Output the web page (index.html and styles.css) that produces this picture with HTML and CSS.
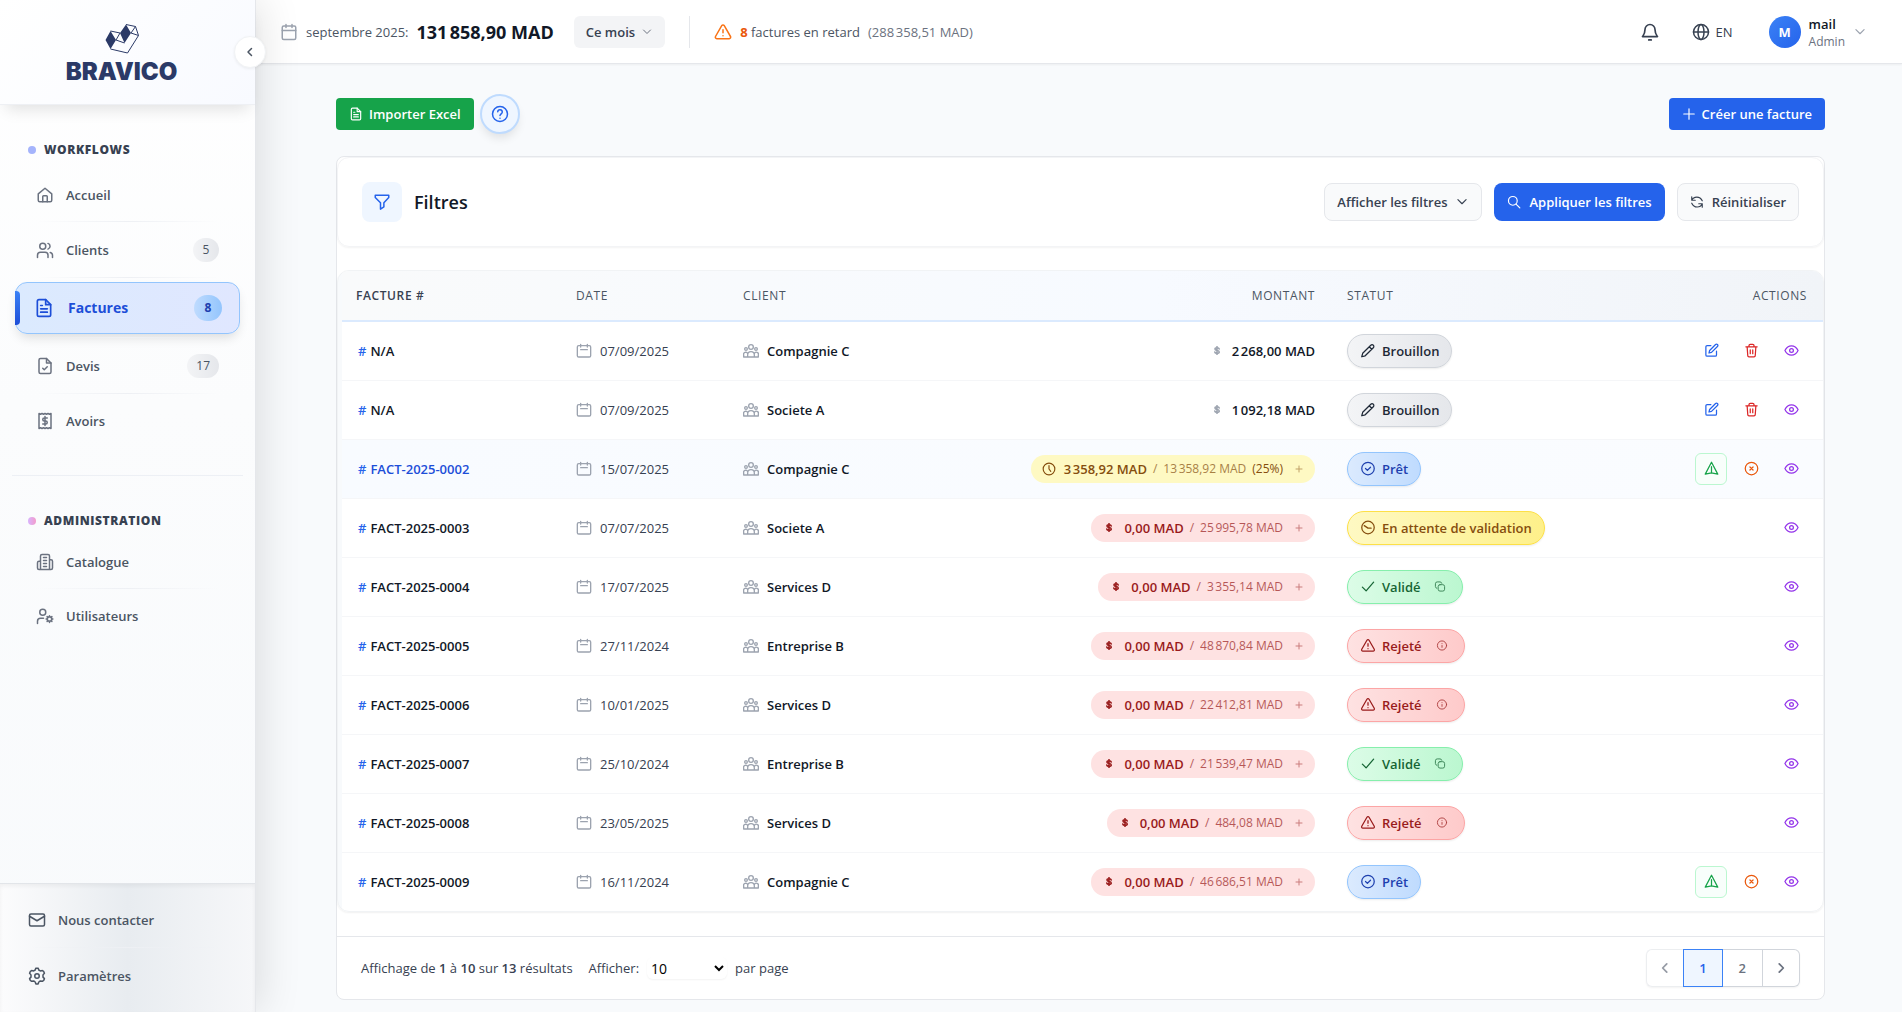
FILE: index.html
```html
<!DOCTYPE html>
<html lang="fr">
<head>
    <meta charset="UTF-8">
    <meta name="viewport" content="width=device-width, initial-scale=1.0">
    <title>Bravico - Factures</title>
    <link rel="stylesheet" href="styles.css">
</head>
<body>

    <!-- Icônes partagées -->
    <svg class="sprite" aria-hidden="true">
        <symbol id="i-home" viewBox="0 0 24 24"><path d="M3 10.5 12 3l9 7.500V19a2 2 0 0 1-2 2H5a2 2 0 0 1-2-2z"/><path d="M9 21v-7a1 1 0 0 1 1-1h4a1 1 0 0 1 1 1v7"/></symbol>
        <symbol id="i-users" viewBox="0 0 24 24"><circle cx="9" cy="7" r="4"/><path d="M2 22v-3a4 4 0 0 1 4-4h6a4 4 0 0 1 4 4v3M16 3.200a4 4 0 0 1 0 7.600M19 15.200a4 4 0 0 1 3 3.800v3"/></symbol>
        <symbol id="i-file" viewBox="0 0 24 24"><path d="M14 2H6a2 2 0 0 0-2 2v16a2 2 0 0 0 2 2h12a2 2 0 0 0 2-2V8z"/><path d="M14 2v6h6M8 9h2M8 13h8M8 17h8"/></symbol>
        <symbol id="i-file-check" viewBox="0 0 24 24"><path d="M14 2H6a2 2 0 0 0-2 2v16a2 2 0 0 0 2 2h12a2 2 0 0 0 2-2V8z"/><path d="M14 2v6h6M9 15l2 2 4-4"/></symbol>
        <symbol id="i-receipt" viewBox="0 0 24 24"><path d="M4 2v20l2-1 2 1 2-1 2 1 2-1 2 1 2-1 2 1V2l-2 1-2-1-2 1-2-1-2 1-2-1-2 1z"/><path d="M15 8h-4a2 2 0 0 0 0 4h2a2 2 0 0 1 0 4H9M12 6v12"/></symbol>
        <symbol id="i-building" viewBox="0 0 24 24"><path d="M6 22V4a2 2 0 0 1 2-2h8a2 2 0 0 1 2 2v18zM6 11H4a2 2 0 0 0-2 2v7a2 2 0 0 0 2 2h2M18 9h2a2 2 0 0 1 2 2v9a2 2 0 0 1-2 2h-2M10 6h4M10 10h4M10 14h4M10 18h4"/></symbol>
        <symbol id="i-user-cog" viewBox="0 0 24 24"><circle cx="9" cy="7" r="4"/><path d="M2 22v-3a4 4 0 0 1 4-4h4"/><circle cx="18" cy="16" r="3"/><path d="M18 11.500V13M18 19v1.500M22.500 16H21M15 16h-1.500M21.200 12.800l-1 1M15.800 18.200l-1 1M21.200 19.200l-1-1M15.800 13.800l-1-1"/></symbol>
        <symbol id="i-mail" viewBox="0 0 24 24"><rect x="2" y="4" width="20" height="16" rx="2"/><path d="m2 7 10 6 10-6"/></symbol>
        <symbol id="i-cog" viewBox="0 0 24 24"><path d="M9.600 4 10.500 1.500h3L14.400 4l2 1.200 2.700-.5 1.800 1.200 1 2.400L20 10.500v3l1.900 2-1 2.400-1.800 1.200-2.700-.5-2 1.400-.9 2.500h-3L9.600 20l-2-1.400-2.700.5-1.800-1.200-1-2.400 1.900-2v-3l-1.900-2.200 1-2.400 1.800-1.200 2.700.5z"/><circle cx="12" cy="12" r="3"/></symbol>
        <symbol id="i-calendar" viewBox="0 0 24 24"><rect x="3" y="4" width="18" height="18" rx="2"/><path d="M8 2v4M16 2v4M3 10h18"/></symbol>
        <symbol id="i-date" viewBox="0 0 24 24"><rect x="2" y="4" width="20" height="17" rx="2"/><path d="M7 2v4M17 2v4M7 10h10"/></symbol>
        <symbol id="i-warning" viewBox="0 0 24 24"><path d="M10.300 3.600 2 18a2 2 0 0 0 1.700 3h16.600a2 2 0 0 0 1.700-3L13.700 3.600a2 2 0 0 0-3.400 0z"/><path d="M12 9v4M12 17v.1"/></symbol>
        <symbol id="i-bell" viewBox="0 0 24 24"><path d="M18 9A6 6 0 0 0 6 9c0 5-1.500 6.500-3 8.500h18c-1.500-2-3-3.500-3-8.500zM10.500 21.500h3"/></symbol>
        <symbol id="i-globe" viewBox="0 0 24 24"><circle cx="12" cy="12" r="10"/><ellipse cx="12" cy="12" rx="4" ry="10"/><path d="M2 12h20"/></symbol>
        <symbol id="i-down" viewBox="0 0 24 24"><path d="m5 8 7 7 7-7"/></symbol>
        <symbol id="i-left" viewBox="0 0 24 24"><path d="m15 5-7 7 7 7"/></symbol>
        <symbol id="i-right" viewBox="0 0 24 24"><path d="m9 5 7 7-7 7"/></symbol>
        <symbol id="i-help" viewBox="0 0 24 24"><circle cx="12" cy="12" r="10"/><path d="M9 9a3 3 0 0 1 6 .5c0 2-3 2.500-3 4.500M12 17.500v.1"/></symbol>
        <symbol id="i-plus" viewBox="0 0 24 24"><path d="M12 3v18M3 12h18"/></symbol>
        <symbol id="i-filter" viewBox="0 0 24 24"><path d="M3 3h18v3l-6.500 7v5.500L10 21.500V13L3 6z"/></symbol>
        <symbol id="i-search" viewBox="0 0 24 24"><circle cx="10" cy="10" r="7.500"/><path d="m15.500 15.500 6.500 6.500"/></symbol>
        <symbol id="i-refresh" viewBox="0 0 24 24"><path d="M3 3v6h6M21 21v-6h-6M3 9c3-7 14-8 18 1M21 15c-3 7-14 8-18-1"/></symbol>
        <symbol id="i-group" viewBox="0 0 24 24"><circle cx="12" cy="6" r="3.500"/><circle cx="4.500" cy="9" r="2"/><circle cx="19.500" cy="9" r="2"/><path d="M7 21v-3a5 5 0 0 1 10 0v3zM7 21H1v-3a3 3 0 0 1 6-2M17 21h6v-3a3 3 0 0 0-6-2"/></symbol>
        <symbol id="i-dollar" viewBox="0 0 24 24"><path d="M18 8c-.5-2.500-3-3.500-6-3.500S6.500 6 6.500 8.200C6.500 14 18 10 18 15.800c0 2.200-2.500 3.700-6 3.700-3 0-5.500-1-6-3.500M12 1v22"/></symbol>
        <symbol id="i-clock" viewBox="0 0 24 24"><circle cx="12" cy="12" r="10"/><path d="M12 6v6l3 4"/></symbol>
        <symbol id="i-wait" viewBox="0 0 24 24"><circle cx="12" cy="12" r="10"/><path d="m6 9 6 4h5"/></symbol>
        <symbol id="i-pencil" viewBox="0 0 24 24"><path d="M16.500 3.500a2.500 2.500 0 0 1 4 4L7.500 20.500 2 22l1.500-5.500zM14 6l4 4"/></symbol>
        <symbol id="i-ok" viewBox="0 0 24 24"><circle cx="12" cy="12" r="10"/><path d="m8 12 3 3 5-5"/></symbol>
        <symbol id="i-check" viewBox="0 0 24 24"><path d="m3 13 6 6L21 5"/></symbol>
        <symbol id="i-copy" viewBox="0 0 24 24"><rect x="8" y="8" width="14" height="14" rx="4"/><path d="M5 16a4 4 0 0 1-3-4V6a4 4 0 0 1 4-4h6a4 4 0 0 1 4 3"/></symbol>
        <symbol id="i-info" viewBox="0 0 24 24"><circle cx="12" cy="12" r="10"/><path d="M12 12v4M12 8v.1"/></symbol>
        <symbol id="i-edit" viewBox="0 0 24 24"><path d="M11 4H5a2 2 0 0 0-2 2v13a2 2 0 0 0 2 2h13a2 2 0 0 0 2-2v-6"/><path d="M18.500 2.500a2 2 0 0 1 3 3L12 15l-4 1 1-4z"/></symbol>
        <symbol id="i-trash" viewBox="0 0 24 24"><path d="M3 6h18M5 6l1 14a2 2 0 0 0 2 2h8a2 2 0 0 0 2-2l1-14M8 6V4a2 2 0 0 1 2-2h4a2 2 0 0 1 2 2v2M10 11v6M14 11v6"/></symbol>
        <symbol id="i-eye" viewBox="0 0 24 24"><path d="M1.500 12C4 7 8 4.500 12 4.500S20 7 22.500 12C20 17 16 19.500 12 19.500S4 17 1.500 12z"/><circle cx="12" cy="12" r="3"/></symbol>
        <symbol id="i-send" viewBox="0 0 24 24"><path d="M12 2 2 21l10-2 10 2zM12 19V9"/></symbol>
        <symbol id="i-cancel" viewBox="0 0 24 24"><circle cx="12" cy="12" r="10"/><path d="m9.500 9.500 5 5M14.500 9.500l-5 5"/></symbol>
    </svg>

    <div class="app">

        <!-- Barre latérale -->
        <aside class="sidebar">
            <div class="brand">
                <svg class="brand-mark" viewBox="0 0 34 30" aria-hidden="true">
                    <path class="fill" d="M5.500 7 11 16 5.500 25 .5 16zM21 .5 26 9 19.500 19 15 9z"/>
                    <path class="line" d="M21 .5 30.500 2.500 33.500 11.500 22.500 29 5.500 25M5.500 7 15 9M11 16l8.500 3M26 9l7.500 2.500M11 16l4-7M26 9l4.500-6.500"/>
                </svg>
                <span class="brand-name">BRAVICO</span>
            </div>
            <button class="collapse" aria-label="Réduire le menu"><svg class="icon"><use href="#i-left"/></svg></button>

            <nav class="menu">
                <h2 class="menu-title"><span class="dot"></span>WORKFLOWS</h2>
                <ul class="nav">
                    <li><a href="#" class="nav-link"><svg class="icon"><use href="#i-home"/></svg>Accueil</a></li>
                    <li><a href="#" class="nav-link has-count"><svg class="icon"><use href="#i-users"/></svg>Clients<span class="count">5</span></a></li>
                    <li><a href="#" class="nav-link active"><svg class="icon"><use href="#i-file"/></svg>Factures<span class="count">8</span></a></li>
                    <li><a href="#" class="nav-link has-count"><svg class="icon"><use href="#i-file-check"/></svg>Devis<span class="count">17</span></a></li>
                    <li><a href="#" class="nav-link"><svg class="icon"><use href="#i-receipt"/></svg>Avoirs</a></li>
                </ul>
                <div class="menu-admin">
                    <h2 class="menu-title"><span class="dot pink"></span>ADMINISTRATION</h2>
                    <ul class="nav">
                        <li><a href="#" class="nav-link"><svg class="icon"><use href="#i-building"/></svg>Catalogue</a></li>
                        <li><a href="#" class="nav-link"><svg class="icon"><use href="#i-user-cog"/></svg>Utilisateurs</a></li>
                    </ul>
                </div>
            </nav>

            <ul class="nav nav-bottom">
                <li><a href="#" class="nav-link has-count"><svg class="icon"><use href="#i-mail"/></svg>Nous contacter</a></li>
                <li><a href="#" class="nav-link has-count"><svg class="icon"><use href="#i-cog"/></svg>Paramètres</a></li>
            </ul>
        </aside>

        <div class="content">

            <!-- En-tête -->
            <header class="topbar">
                <div class="revenue">
                    <svg class="icon muted"><use href="#i-calendar"/></svg>
                    <span class="revenue-label">septembre 2025:</span>
                    <strong class="revenue-total">131&#8239;858,90 MAD</strong>
                </div>
                <button class="period">Ce mois <svg class="icon"><use href="#i-down"/></svg></button>
                <div class="late">
                    <svg class="icon"><use href="#i-warning"/></svg>
                    <span><b>8</b> factures en retard</span>
                    <span class="late-total">(288&#8239;358,51 MAD)</span>
                </div>
                <div class="account">
                    <button class="plain" aria-label="Notifications"><svg class="icon bell"><use href="#i-bell"/></svg></button>
                    <button class="plain lang"><svg class="icon"><use href="#i-globe"/></svg>EN</button>
                    <button class="plain user">
                        <span class="avatar">M</span>
                        <span class="user-text"><span class="user-name">mail</span><span class="user-role">Admin</span></span>
                        <svg class="icon small muted"><use href="#i-down"/></svg>
                    </button>
                </div>
            </header>

            <main class="page">
                <div class="toolbar">
                    <button class="btn green"><svg class="icon small"><use href="#i-file"/></svg>Importer Excel</button>
                    <button class="help" aria-label="Aide"><svg class="icon"><use href="#i-help"/></svg></button>
                    <button class="btn blue create"><svg class="icon small"><use href="#i-plus"/></svg>Créer une facture</button>
                </div>

                <section class="card">
                    <!-- Filtres -->
                    <div class="filters">
                        <span class="filters-icon"><svg class="icon"><use href="#i-filter"/></svg></span>
                        <h1>Filtres</h1>
                        <div class="filters-actions">
                            <button class="btn tall light">Afficher les filtres <svg class="icon small"><use href="#i-down"/></svg></button>
                            <button class="btn tall blue"><svg class="icon small"><use href="#i-search"/></svg>Appliquer les filtres</button>
                            <button class="btn tall light"><svg class="icon small"><use href="#i-refresh"/></svg>Réinitialiser</button>
                        </div>
                    </div>

                    <!-- Liste des factures -->
                    <div class="table-wrap">
                        <table class="invoices">
                            <colgroup>
                                <col class="col-number"><col class="col-date"><col class="col-client"><col class="col-amount"><col><col class="col-actions">
                            </colgroup>
                            <thead>
                                <tr>
                                    <th class="first">FACTURE #</th>
                                    <th>DATE</th>
                                    <th>CLIENT</th>
                                    <th class="right">MONTANT</th>
                                    <th>STATUT</th>
                                    <th class="right">ACTIONS</th>
                                </tr>
                            </thead>
                            <tbody>
                                <tr>
                                    <td><span class="number"><i>#</i>N/A</span></td>
                                    <td><span class="date"><svg class="icon"><use href="#i-date"/></svg>07/09/2025</span></td>
                                    <td><span class="client"><svg class="icon"><use href="#i-group"/></svg>Compagnie C</span></td>
                                    <td class="right"><span class="amount plain-amount"><svg class="icon dollar"><use href="#i-dollar"/></svg>2&#8239;268,00 MAD</span></td>
                                    <td><span class="status draft"><svg class="icon"><use href="#i-pencil"/></svg>Brouillon</span></td>
                                    <td><div class="actions">
                                        <button class="edit" aria-label="Modifier"><svg class="icon"><use href="#i-edit"/></svg></button>
                                        <button class="delete" aria-label="Supprimer"><svg class="icon"><use href="#i-trash"/></svg></button>
                                        <button class="view" aria-label="Voir"><svg class="icon"><use href="#i-eye"/></svg></button>
                                    </div></td>
                                </tr>
                                <tr>
                                    <td><span class="number"><i>#</i>N/A</span></td>
                                    <td><span class="date"><svg class="icon"><use href="#i-date"/></svg>07/09/2025</span></td>
                                    <td><span class="client"><svg class="icon"><use href="#i-group"/></svg>Societe A</span></td>
                                    <td class="right"><span class="amount plain-amount"><svg class="icon dollar"><use href="#i-dollar"/></svg>1&#8239;092,18 MAD</span></td>
                                    <td><span class="status draft"><svg class="icon"><use href="#i-pencil"/></svg>Brouillon</span></td>
                                    <td><div class="actions">
                                        <button class="edit" aria-label="Modifier"><svg class="icon"><use href="#i-edit"/></svg></button>
                                        <button class="delete" aria-label="Supprimer"><svg class="icon"><use href="#i-trash"/></svg></button>
                                        <button class="view" aria-label="Voir"><svg class="icon"><use href="#i-eye"/></svg></button>
                                    </div></td>
                                </tr>
                                <tr class="hovered">
                                    <td><span class="number"><i>#</i>FACT-2025-0002</span></td>
                                    <td><span class="date"><svg class="icon"><use href="#i-date"/></svg>15/07/2025</span></td>
                                    <td><span class="client"><svg class="icon"><use href="#i-group"/></svg>Compagnie C</span></td>
                                    <td class="right"><span class="amount partial"><svg class="icon"><use href="#i-clock"/></svg>3&#8239;358,92 MAD<small>/</small><small>13&#8239;358,92 MAD</small><em>(25%)</em><svg class="icon more"><use href="#i-plus"/></svg></span></td>
                                    <td><span class="status ready"><svg class="icon"><use href="#i-ok"/></svg>Prêt</span></td>
                                    <td><div class="actions">
                                        <button class="send" aria-label="Envoyer"><svg class="icon"><use href="#i-send"/></svg></button>
                                        <button class="cancel" aria-label="Annuler"><svg class="icon"><use href="#i-cancel"/></svg></button>
                                        <button class="view" aria-label="Voir"><svg class="icon"><use href="#i-eye"/></svg></button>
                                    </div></td>
                                </tr>
                                <tr>
                                    <td><span class="number"><i>#</i>FACT-2025-0003</span></td>
                                    <td><span class="date"><svg class="icon"><use href="#i-date"/></svg>07/07/2025</span></td>
                                    <td><span class="client"><svg class="icon"><use href="#i-group"/></svg>Societe A</span></td>
                                    <td class="right"><span class="amount unpaid"><svg class="icon dollar"><use href="#i-dollar"/></svg>0,00 MAD<small>/</small><small>25&#8239;995,78 MAD</small><svg class="icon more"><use href="#i-plus"/></svg></span></td>
                                    <td><span class="status pending"><svg class="icon"><use href="#i-wait"/></svg>En attente de validation</span></td>
                                    <td><div class="actions">
                                        <button class="view" aria-label="Voir"><svg class="icon"><use href="#i-eye"/></svg></button>
                                    </div></td>
                                </tr>
                                <tr>
                                    <td><span class="number"><i>#</i>FACT-2025-0004</span></td>
                                    <td><span class="date"><svg class="icon"><use href="#i-date"/></svg>17/07/2025</span></td>
                                    <td><span class="client"><svg class="icon"><use href="#i-group"/></svg>Services D</span></td>
                                    <td class="right"><span class="amount unpaid"><svg class="icon dollar"><use href="#i-dollar"/></svg>0,00 MAD<small>/</small><small>3&#8239;355,14 MAD</small><svg class="icon more"><use href="#i-plus"/></svg></span></td>
                                    <td><span class="status valid"><svg class="icon"><use href="#i-check"/></svg>Validé<svg class="icon extra"><use href="#i-copy"/></svg></span></td>
                                    <td><div class="actions">
                                        <button class="view" aria-label="Voir"><svg class="icon"><use href="#i-eye"/></svg></button>
                                    </div></td>
                                </tr>
                                <tr>
                                    <td><span class="number"><i>#</i>FACT-2025-0005</span></td>
                                    <td><span class="date"><svg class="icon"><use href="#i-date"/></svg>27/11/2024</span></td>
                                    <td><span class="client"><svg class="icon"><use href="#i-group"/></svg>Entreprise B</span></td>
                                    <td class="right"><span class="amount unpaid"><svg class="icon dollar"><use href="#i-dollar"/></svg>0,00 MAD<small>/</small><small>48&#8239;870,84 MAD</small><svg class="icon more"><use href="#i-plus"/></svg></span></td>
                                    <td><span class="status rejected"><svg class="icon"><use href="#i-warning"/></svg>Rejeté<svg class="icon extra"><use href="#i-info"/></svg></span></td>
                                    <td><div class="actions">
                                        <button class="view" aria-label="Voir"><svg class="icon"><use href="#i-eye"/></svg></button>
                                    </div></td>
                                </tr>
                                <tr>
                                    <td><span class="number"><i>#</i>FACT-2025-0006</span></td>
                                    <td><span class="date"><svg class="icon"><use href="#i-date"/></svg>10/01/2025</span></td>
                                    <td><span class="client"><svg class="icon"><use href="#i-group"/></svg>Services D</span></td>
                                    <td class="right"><span class="amount unpaid"><svg class="icon dollar"><use href="#i-dollar"/></svg>0,00 MAD<small>/</small><small>22&#8239;412,81 MAD</small><svg class="icon more"><use href="#i-plus"/></svg></span></td>
                                    <td><span class="status rejected"><svg class="icon"><use href="#i-warning"/></svg>Rejeté<svg class="icon extra"><use href="#i-info"/></svg></span></td>
                                    <td><div class="actions">
                                        <button class="view" aria-label="Voir"><svg class="icon"><use href="#i-eye"/></svg></button>
                                    </div></td>
                                </tr>
                                <tr>
                                    <td><span class="number"><i>#</i>FACT-2025-0007</span></td>
                                    <td><span class="date"><svg class="icon"><use href="#i-date"/></svg>25/10/2024</span></td>
                                    <td><span class="client"><svg class="icon"><use href="#i-group"/></svg>Entreprise B</span></td>
                                    <td class="right"><span class="amount unpaid"><svg class="icon dollar"><use href="#i-dollar"/></svg>0,00 MAD<small>/</small><small>21&#8239;539,47 MAD</small><svg class="icon more"><use href="#i-plus"/></svg></span></td>
                                    <td><span class="status valid"><svg class="icon"><use href="#i-check"/></svg>Validé<svg class="icon extra"><use href="#i-copy"/></svg></span></td>
                                    <td><div class="actions">
                                        <button class="view" aria-label="Voir"><svg class="icon"><use href="#i-eye"/></svg></button>
                                    </div></td>
                                </tr>
                                <tr>
                                    <td><span class="number"><i>#</i>FACT-2025-0008</span></td>
                                    <td><span class="date"><svg class="icon"><use href="#i-date"/></svg>23/05/2025</span></td>
                                    <td><span class="client"><svg class="icon"><use href="#i-group"/></svg>Services D</span></td>
                                    <td class="right"><span class="amount unpaid"><svg class="icon dollar"><use href="#i-dollar"/></svg>0,00 MAD<small>/</small><small>484,08 MAD</small><svg class="icon more"><use href="#i-plus"/></svg></span></td>
                                    <td><span class="status rejected"><svg class="icon"><use href="#i-warning"/></svg>Rejeté<svg class="icon extra"><use href="#i-info"/></svg></span></td>
                                    <td><div class="actions">
                                        <button class="view" aria-label="Voir"><svg class="icon"><use href="#i-eye"/></svg></button>
                                    </div></td>
                                </tr>
                                <tr>
                                    <td><span class="number"><i>#</i>FACT-2025-0009</span></td>
                                    <td><span class="date"><svg class="icon"><use href="#i-date"/></svg>16/11/2024</span></td>
                                    <td><span class="client"><svg class="icon"><use href="#i-group"/></svg>Compagnie C</span></td>
                                    <td class="right"><span class="amount unpaid"><svg class="icon dollar"><use href="#i-dollar"/></svg>0,00 MAD<small>/</small><small>46&#8239;686,51 MAD</small><svg class="icon more"><use href="#i-plus"/></svg></span></td>
                                    <td><span class="status ready"><svg class="icon"><use href="#i-ok"/></svg>Prêt</span></td>
                                    <td><div class="actions">
                                        <button class="send" aria-label="Envoyer"><svg class="icon"><use href="#i-send"/></svg></button>
                                        <button class="cancel" aria-label="Annuler"><svg class="icon"><use href="#i-cancel"/></svg></button>
                                        <button class="view" aria-label="Voir"><svg class="icon"><use href="#i-eye"/></svg></button>
                                    </div></td>
                                </tr>
                            </tbody>
                        </table>
                    </div>

                    <!-- Pagination -->
                    <div class="pagination">
                        <p>Affichage de <b>1</b> à <b>10</b> sur <b>13</b> résultats</p>
                        <label for="per-page">Afficher:</label>
                        <select id="per-page">
                            <option>10</option>
                            <option>25</option>
                            <option>50</option>
                        </select>
                        <span>par page</span>
                        <div class="pages">
                            <button class="prev" aria-label="Page précédente" disabled><svg class="icon small"><use href="#i-left"/></svg></button>
                            <button class="current">1</button>
                            <button>2</button>
                            <button class="next" aria-label="Page suivante"><svg class="icon small"><use href="#i-right"/></svg></button>
                        </div>
                    </div>
                </section>
            </main>
        </div>
    </div>

</body>
</html>
```
FILE: styles.css
```css
* {
    box-sizing: border-box;
}
body {
    margin: 0;
    font-family: "Open Sans", "Noto Sans", sans-serif;
    font-size: 13px;
    line-height: 20px;
    color: #374151;
    background: #f8fafc;
}
button, select {
    font: inherit;
    color: inherit;
    cursor: pointer;
}
a {
    color: inherit;
    text-decoration: none;
}
h1, h2, p, ul {
    margin: 0;
    padding: 0;
}
b, strong {
    font-weight: 600;
}
.sprite {
    position: absolute;
    width: 0;
    height: 0;
}
.icon {
    width: 18px;
    height: 18px;
    flex: none;
    fill: none;
    stroke: currentColor;
    stroke-width: 2;
    stroke-linecap: round;
    stroke-linejoin: round;
}
.icon.small {
    width: 14px;
    height: 14px;
}
.muted {
    color: #9ca3af;
}
.app {
    display: flex;
    min-height: 100vh;
}

/* Barre latérale */
.sidebar {
    position: relative;
    z-index: 2;
    width: 256px;
    flex: none;
    display: flex;
    flex-direction: column;
    background: linear-gradient(180deg, #ffffff, #fbfcfd 40%, #f8fafc);
    border-right: 1px solid #e5e7eb;
    box-shadow: 4px 0 40px rgba(0, 0, 0, 0.12);
}
.brand {
    height: 105px;
    padding: 10px 12px 0 0;
    display: flex;
    flex-direction: column;
    align-items: center;
    justify-content: center;
    background: linear-gradient(135deg, #ffffff, #f8faff);
    border-bottom: 1px solid #eef0f4;
    box-shadow: 0 10px 15px -6px rgba(0, 0, 0, 0.12);
}
.brand-mark {
    width: 34px;
    height: 30px;
}
.brand-mark .fill {
    fill: #2b3a67;
}
.brand-mark .line {
    fill: none;
    stroke: #2b3a67;
    stroke-width: 1;
}
.brand-name {
    font-family: Inter, sans-serif;
    font-size: 24px;
    font-weight: 900;
    line-height: 36px;
    color: #2b3a67;
}
.collapse {
    position: absolute;
    top: 36px;
    right: -11px;
    width: 32px;
    height: 32px;
    padding: 0;
    display: flex;
    align-items: center;
    justify-content: center;
    color: #4b5563;
    background: #ffffff;
    border: 1px solid #f1f3f5;
    border-radius: 50%;
    box-shadow: 0 1px 3px rgba(0, 0, 0, 0.06);
}
.collapse .icon {
    width: 12px;
    height: 12px;
    stroke-width: 3;
}
.menu {
    flex: 1;
    padding: 35px 12px 0;
}
.menu-title {
    display: flex;
    align-items: center;
    gap: 8px;
    padding-left: 16px;
    font-size: 12px;
    font-weight: 800;
    line-height: 20px;
    letter-spacing: 0.05em;
    color: #374151;
}
.menu-title + .nav {
    margin-top: 12px;
}
.dot {
    width: 8px;
    height: 8px;
    border-radius: 50%;
    background: #a5b4fc;
}
.dot.pink {
    background: linear-gradient(90deg, #d8b4fe, #f39ccb);
}
.nav {
    list-style: none;
}
.nav li:not(:last-child)::after {
    content: "";
    display: block;
    height: 1px;
    margin: 3px 24px 4px;
    background: linear-gradient(90deg, transparent, #eef0f4, transparent);
}
.nav-link {
    display: flex;
    align-items: center;
    gap: 12px;
    height: 46px;
    padding: 0 24px;
    font-weight: 600;
    color: #4b5563;
}
.nav-link.has-count {
    height: 48px;
}
.nav-link .icon {
    color: #6b7280;
}
.count {
    margin-left: auto;
    min-width: 26px;
    padding: 0 9px;
    font-size: 12px;
    font-weight: 400;
    line-height: 24px;
    text-align: center;
    color: #4b5563;
    background: linear-gradient(90deg, #f3f4f6, #e5e7eb);
    border-radius: 12px;
}
.nav-link.active {
    height: 52px;
    margin: 0 3px;
    padding: 0 17px 0 14px;
    gap: 14px;
    font-size: 14px;
    font-weight: 700;
    color: #1d4ed8;
    background: linear-gradient(90deg, #dbeafe, #e0e7ff);
    border: 1px solid #93c5fd;
    border-radius: 12px;
    box-shadow: 0 6px 12px -3px rgba(0, 0, 0, 0.14);
}
.nav-link.active::before {
    content: "";
    width: 5px;
    height: 34px;
    margin-left: -15px;
    border-radius: 0 4px 4px 0;
    background: linear-gradient(180deg, #3b82f6, #1d4ed8);
}
.nav-link.active .icon {
    width: 20px;
    height: 22px;
    color: #1d4ed8;
}
.nav-link.active .count {
    min-width: 28px;
    font-weight: 700;
    line-height: 26px;
    color: #1e40af;
    background: linear-gradient(90deg, #bfdbfe, #93c5fd);
    border-radius: 13px;
}
.menu-admin {
    margin-top: 31px;
    padding-top: 35px;
    border-top: 1px solid #edf0f5;
}
.menu-admin .menu-title + .nav {
    margin-top: 8px;
}
.nav-bottom {
    padding: 12px 4px;
    border-top: 1px solid #e2e5e9;
    background: linear-gradient(90deg, #fcfcfd, #e8ecf0 50%, #f6f7f9);
    box-shadow: inset 0 2px 4px rgba(0, 0, 0, 0.05);
}
.nav-bottom .icon {
    color: #4b5563;
}

/* En-tête */
.content {
    flex: 1;
    min-width: 0;
}
.topbar {
    display: flex;
    align-items: center;
    height: 64px;
    padding: 0 35px 0 24px;
    background: #ffffff;
    border-bottom: 1px solid #e5e7eb;
    box-shadow: 0 1px 2px rgba(0, 0, 0, 0.05);
}
.revenue {
    display: flex;
    align-items: center;
    gap: 8px;
}
.revenue-label {
    color: #4b5563;
    font-weight: 500;
}
.revenue-total {
    font-size: 18px;
    font-weight: 700;
    color: #111827;
}
.period {
    height: 32px;
    margin-left: 20px;
    padding: 0 12px;
    display: flex;
    align-items: center;
    gap: 6px;
    font-weight: 600;
    background: #f3f4f6;
    border: 0;
    border-radius: 6px;
}
.period .icon {
    width: 12px;
    height: 12px;
    color: #6b7280;
}
.late {
    display: flex;
    align-items: center;
    gap: 8px;
    height: 32px;
    margin-left: 24px;
    padding-left: 24px;
    color: #4b5563;
    border-left: 1px solid #e5e7eb;
}
.late .icon {
    color: #f97316;
}
.late b {
    font-weight: 700;
    color: #ea580c;
}
.late-total {
    color: #6b7280;
}
.account {
    margin-left: auto;
    display: flex;
    align-items: center;
}
.plain {
    display: flex;
    align-items: center;
    padding: 0;
    background: none;
    border: 0;
}
.bell {
    width: 20px;
    height: 20px;
}
.lang {
    gap: 6px;
    margin: 0 36px 0 32px;
    font-weight: 500;
}
.user {
    gap: 8px;
}
.avatar {
    width: 32px;
    height: 32px;
    font-weight: 700;
    line-height: 32px;
    color: #ffffff;
    background: linear-gradient(135deg, #3b82f6, #2563eb);
    border-radius: 50%;
}
.user-text {
    display: grid;
    padding-top: 2px;
    text-align: left;
    line-height: 18px;
}
.user-name {
    font-weight: 600;
    color: #111827;
}
.user-role {
    font-size: 12px;
    color: #6b7280;
}

/* Boutons */
.page {
    padding: 30px 77px 12px 80px;
}
.toolbar {
    display: flex;
    align-items: center;
    gap: 6px;
    margin-bottom: 22px;
}
.btn {
    display: flex;
    align-items: center;
    gap: 6px;
    height: 32px;
    padding: 0 12px;
    font-weight: 600;
    border: 1px solid transparent;
    border-radius: 4px;
}
.btn.tall {
    height: 38px;
    gap: 8px;
    border-radius: 8px;
}
.green {
    color: #ffffff;
    background: #16a34a;
}
.blue {
    color: #ffffff;
    background: #2563eb;
}
.light {
    background: #f9fafb;
    border-color: #e5e7eb;
}
.create {
    margin-left: auto;
}
.help {
    width: 40px;
    height: 40px;
    padding: 0;
    display: flex;
    align-items: center;
    justify-content: center;
    color: #2563eb;
    background: #eff6ff;
    border: 2px solid #bfdbfe;
    border-radius: 50%;
    box-shadow: 0 6px 10px -2px rgba(0, 0, 0, 0.1);
}

/* Carte principale */
.card {
    background: #ffffff;
    border: 1px solid #e5e7eb;
    border-radius: 8px;
}
.filters {
    display: flex;
    align-items: center;
    gap: 12px;
    height: 90px;
    padding: 0 24px;
    border: 1px solid #f3f4f6;
    border-radius: 12px;
    box-shadow: 0 1px 2px rgba(0, 0, 0, 0.05);
}
.filters-icon {
    width: 40px;
    height: 40px;
    display: flex;
    align-items: center;
    justify-content: center;
    color: #2563eb;
    background: #eff6ff;
    border-radius: 8px;
}
.filters h1 {
    font-size: 18px;
    font-weight: 600;
    color: #111827;
}
.filters-actions {
    display: flex;
    gap: 12px;
    margin-left: auto;
}

/* Tableau */
.table-wrap {
    margin: 23px 0 24px;
    padding-left: 4px;
    background: linear-gradient(90deg, #f8fafc, #f8fafc 4px, #ffffff 4px);
    border: 1px solid #f1f3f5;
    border-radius: 12px;
    box-shadow: 0 1px 2px rgba(0, 0, 0, 0.06);
    overflow: hidden;
}
.invoices {
    width: 100%;
    table-layout: fixed;
    border-collapse: collapse;
}
.col-number {
    width: 218px;
}
.col-date {
    width: 167px;
}
.col-client {
    width: 250px;
}
.col-amount {
    width: 354px;
}
.col-actions {
    width: 180px;
}
.invoices thead tr {
    height: 50px;
    background: linear-gradient(90deg, #f9fafb, #f7faff 55%, #f1f4f8);
    border-bottom: 2px solid #dbeafe;
}
.invoices th {
    padding: 0 16px;
    font-size: 12px;
    font-weight: 500;
    letter-spacing: 0.05em;
    text-align: left;
    color: #4b5563;
}
.invoices th.first {
    padding-left: 14px;
    font-weight: 600;
    color: #374151;
}
.invoices .right {
    text-align: right;
}
.invoices tbody tr {
    height: 59px;
    border-bottom: 1px solid #f5f6f8;
}
.invoices tbody tr:last-child {
    border-bottom: 0;
}
.invoices tbody tr.hovered {
    background: linear-gradient(90deg, #f8fbff, #fafcff);
}
.invoices td {
    padding: 0 16px;
    white-space: nowrap;
}
.number {
    font-weight: 600;
    color: #111827;
}
.number i {
    margin-right: 4px;
    font-style: normal;
    color: #2563eb;
}
.hovered .number {
    color: #1d4ed8;
}
.date, .client {
    display: flex;
    align-items: center;
    gap: 8px;
}
.date .icon, .client .icon {
    width: 16px;
    height: 16px;
    color: #9ca3af;
}
.client {
    font-weight: 600;
    color: #111827;
}
.amount {
    display: inline-flex;
    align-items: center;
    gap: 8px;
    height: 28px;
    padding: 0 8px 0 11px;
    font-weight: 600;
    vertical-align: middle;
    border-radius: 14px;
}
.amount .icon {
    width: 14px;
    height: 14px;
}
.amount .dollar {
    height: 9px;
    stroke-width: 4;
}
.amount small, .amount em {
    margin-left: -2px;
    font-size: 12px;
    font-weight: 500;
    font-style: normal;
    opacity: 0.7;
}
.amount em {
    opacity: 1;
}
.amount .more {
    height: 8px;
    width: 16px;
    stroke-width: 3;
    opacity: 0.5;
}
.amount.plain-amount {
    padding: 0;
    color: #111827;
}
.plain-amount .dollar {
    color: #9ca3af;
}
.partial {
    color: #854d0e;
    background: #fef9c3;
}
.unpaid {
    color: #991b1b;
    background: #fee2e2;
}
.status {
    display: inline-flex;
    align-items: center;
    gap: 6px;
    height: 34px;
    padding: 0 12px;
    font-weight: 600;
    vertical-align: middle;
    border: 1px solid;
    border-radius: 17px;
    box-shadow: 0 1px 2px rgba(0, 0, 0, 0.08);
}
.status .icon {
    width: 16px;
    height: 15px;
}
.status .extra {
    width: 12px;
    height: 11px;
    margin: 0 4px 0 8px;
    opacity: 0.8;
}
.draft {
    color: #1f2937;
    background: linear-gradient(90deg, #f3f4f6, #e5e7eb);
    border-color: #d1d5db;
}
.ready {
    color: #1e40af;
    background: linear-gradient(90deg, #dbeafe, #bfdbfe);
    border-color: #93c5fd;
}
.pending {
    color: #854d0e;
    background: linear-gradient(90deg, #fef9c3, #fef08a);
    border-color: #fde047;
}
.valid {
    color: #166534;
    background: linear-gradient(90deg, #dcfce7, #bbf7d0);
    border-color: #86efac;
}
.rejected {
    color: #991b1b;
    background: linear-gradient(90deg, #fee2e2, #fecaca);
    border-color: #fca5a5;
}
.actions {
    display: flex;
    justify-content: flex-end;
    gap: 8px;
}
.actions button {
    width: 32px;
    height: 32px;
    padding: 0;
    display: flex;
    align-items: center;
    justify-content: center;
    background: none;
    border: 1px solid transparent;
    border-radius: 6px;
}
.actions .icon {
    width: 15px;
    height: 15px;
}
.actions .edit {
    color: #2563eb;
}
.actions .delete {
    color: #dc2626;
}
.actions .view {
    color: #9333ea;
}
.actions .cancel {
    color: #ea580c;
}
.actions .send {
    color: #16a34a;
    background: #f8fefb;
    border-color: #bbf7d0;
}

/* Pagination */
.pagination {
    display: flex;
    align-items: center;
    height: 63px;
    padding: 0 24px;
    border-top: 1px solid #e5e7eb;
}
.pagination label {
    margin: 0 8px 0 16px;
}
.pagination select {
    width: 80px;
    height: 22px;
    margin-right: 8px;
    font-size: 14px;
    color: #000000;
    background: #ffffff;
    border: 0;
    border-radius: 6px;
    box-shadow: 0 1px 2px rgba(0, 0, 0, 0.05);
}
.pages {
    display: flex;
    margin-left: auto;
    border-radius: 6px;
    box-shadow: 0 1px 2px rgba(0, 0, 0, 0.05);
}
.pages button {
    height: 38px;
    padding: 0 16px;
    font-weight: 600;
    color: #6b7280;
    background: #ffffff;
    border: 1px solid #d1d5db;
    border-left-width: 0;
}
.pages .icon {
    display: block;
    stroke-width: 3;
}
.pages button.prev {
    padding: 0 11px;
    border-color: #e5e7eb;
    border-left-width: 1px;
    border-right-width: 0;
    border-radius: 6px 0 0 6px;
    opacity: 0.7;
}
.pages button.next {
    padding: 0 11px;
    border-radius: 0 6px 6px 0;
}
.pages button.current {
    padding: 0 15px;
    color: #2563eb;
    background: #eff6ff;
    border: 1px solid #3b82f6;
}
```
